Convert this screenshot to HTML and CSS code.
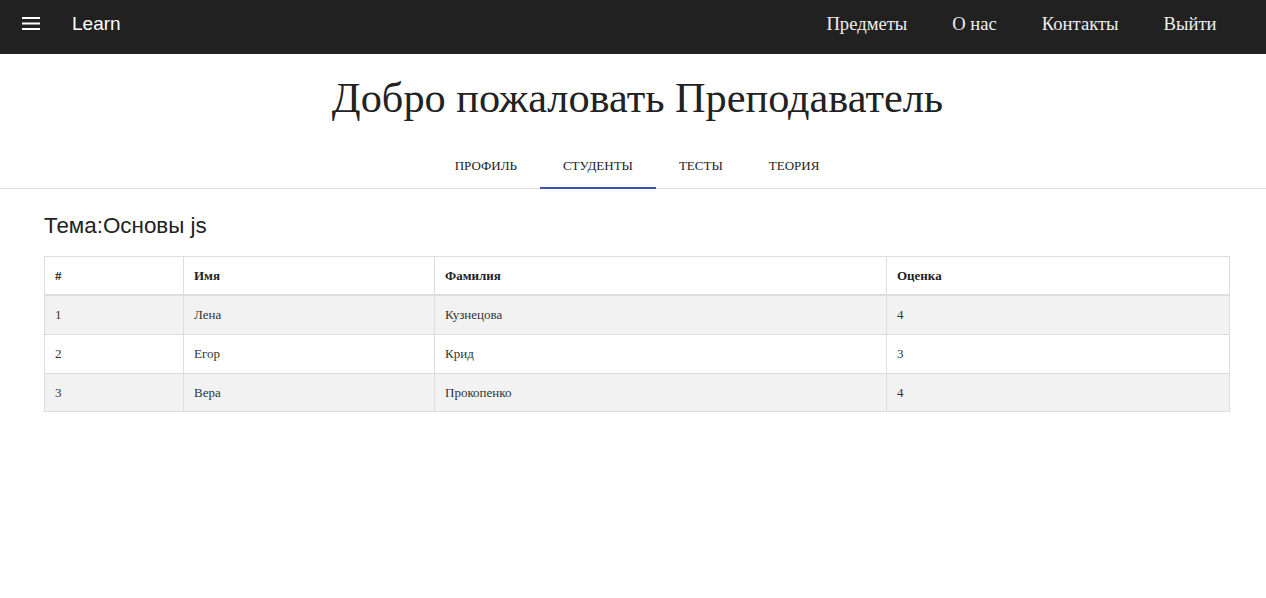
FILE: index.html
```html
<!DOCTYPE html>
<html lang="ru">
<head>
<meta charset="utf-8">
<title>Learn</title>
<link rel="stylesheet" href="styles.css">
</head>
<body>
<nav class="navbar">
  <div class="nav-left">
    <span class="burger" aria-label="menu">
      <svg width="18" height="13" viewBox="0 0 18 13"><rect x="0" y="0" width="18" height="2" fill="#fff"/><rect x="0" y="5.5" width="18" height="2" fill="#fff"/><rect x="0" y="11" width="18" height="2" fill="#fff"/></svg>
    </span>
    <span class="brand">Learn</span>
  </div>
  <ul class="nav-links">
    <li>Предметы</li>
    <li>О нас</li>
    <li>Контакты</li>
    <li>Выйти</li>
  </ul>
</nav>
<h1 class="welcome">Добро пожаловать Преподаватель</h1>
<div class="tabs">
  <div class="tab">ПРОФИЛЬ</div>
  <div class="tab active">СТУДЕНТЫ</div>
  <div class="tab">ТЕСТЫ</div>
  <div class="tab">ТЕОРИЯ</div>
</div>
<main class="content">
  <h2 class="topic">Тема:Основы js</h2>
  <table class="grades">
    <colgroup>
      <col class="c1"><col class="c2"><col class="c3"><col class="c4">
    </colgroup>
    <thead>
      <tr><th>#</th><th>Имя</th><th>Фамилия</th><th>Оценка</th></tr>
    </thead>
    <tbody>
      <tr><td>1</td><td>Лена</td><td>Кузнецова</td><td>4</td></tr>
      <tr><td>2</td><td>Егор</td><td>Крид</td><td>3</td></tr>
      <tr><td>3</td><td>Вера</td><td>Прокопенко</td><td>4</td></tr>
    </tbody>
  </table>
</main>
</body>
</html>
```
FILE: styles.css
```css
html, body {
  margin: 0;
  padding: 0;
  background: #fff;
  font-family: "Liberation Serif", "Times New Roman", serif;
  color: #222;
}
.navbar {
  height: 54px;
  background: #212121;
  display: flex;
  align-items: center;
  justify-content: space-between;
}
.nav-left {
  display: flex;
  align-items: center;
  padding-left: 22px;
}
.burger {
  display: flex;
  width: 18px;
  height: 13px;
  margin-top: -7px;
}
.brand {
  margin-left: 32px;
  font-family: "Liberation Sans", Arial, sans-serif;
  font-size: 19px;
  color: #fff;
  margin-top: -6px;
}
.nav-links {
  list-style: none;
  margin: 0;
  padding: 0 27px 0 0;
  display: flex;
}
.nav-links li {
  padding: 0 22.5px;
  font-size: 18.6px;
  color: #eee;
  margin-top: -6px;
}
.welcome {
  margin: 17px 0 0;
  padding-left: 9px;
  text-align: center;
  font-weight: normal;
  font-size: 42.3px;
  line-height: 54px;
  color: #222;
}
.tabs {
  margin-top: 18px;
  padding-left: 8px;
  display: flex;
  justify-content: center;
  border-bottom: 1px solid #e0e0e0;
}
.tab {
  padding: 0 23px;
  height: 46px;
  line-height: 46px;
  font-size: 13px;
  color: #222;
  border-bottom: 2px solid transparent;
  margin-bottom: -1px;
  box-sizing: border-box;
}
.tab.active {
  border-bottom-color: #3f51b5;
}
.content {
  padding: 0 36px 0 44px;
}
.topic {
  margin: 23px 0 0;
  font-family: "Liberation Sans", Arial, sans-serif;
  font-weight: normal;
  font-size: 22.4px;
  line-height: 28px;
  color: #222;
}
.grades {
  margin-top: 16px;
  width: 100%;
  border-collapse: collapse;
  border: 1px solid #ddd;
  font-size: 13px;
  color: #333;
}
.c1 { width: 139px; }
.c2 { width: 251px; }
.c3 { width: 452px; }
.grades th, .grades td {
  border: 1px solid #ddd;
  text-align: left;
  padding: 0 10px;
  height: 38px;
}
.grades th {
  font-weight: bold;
  color: #222;
  height: 37px;
  border-bottom-width: 2px;
}
.grades tbody tr:nth-child(odd) {
  background: #f2f2f2;
}
.grades tbody tr:last-child td {
  height: 37px;
}
```
